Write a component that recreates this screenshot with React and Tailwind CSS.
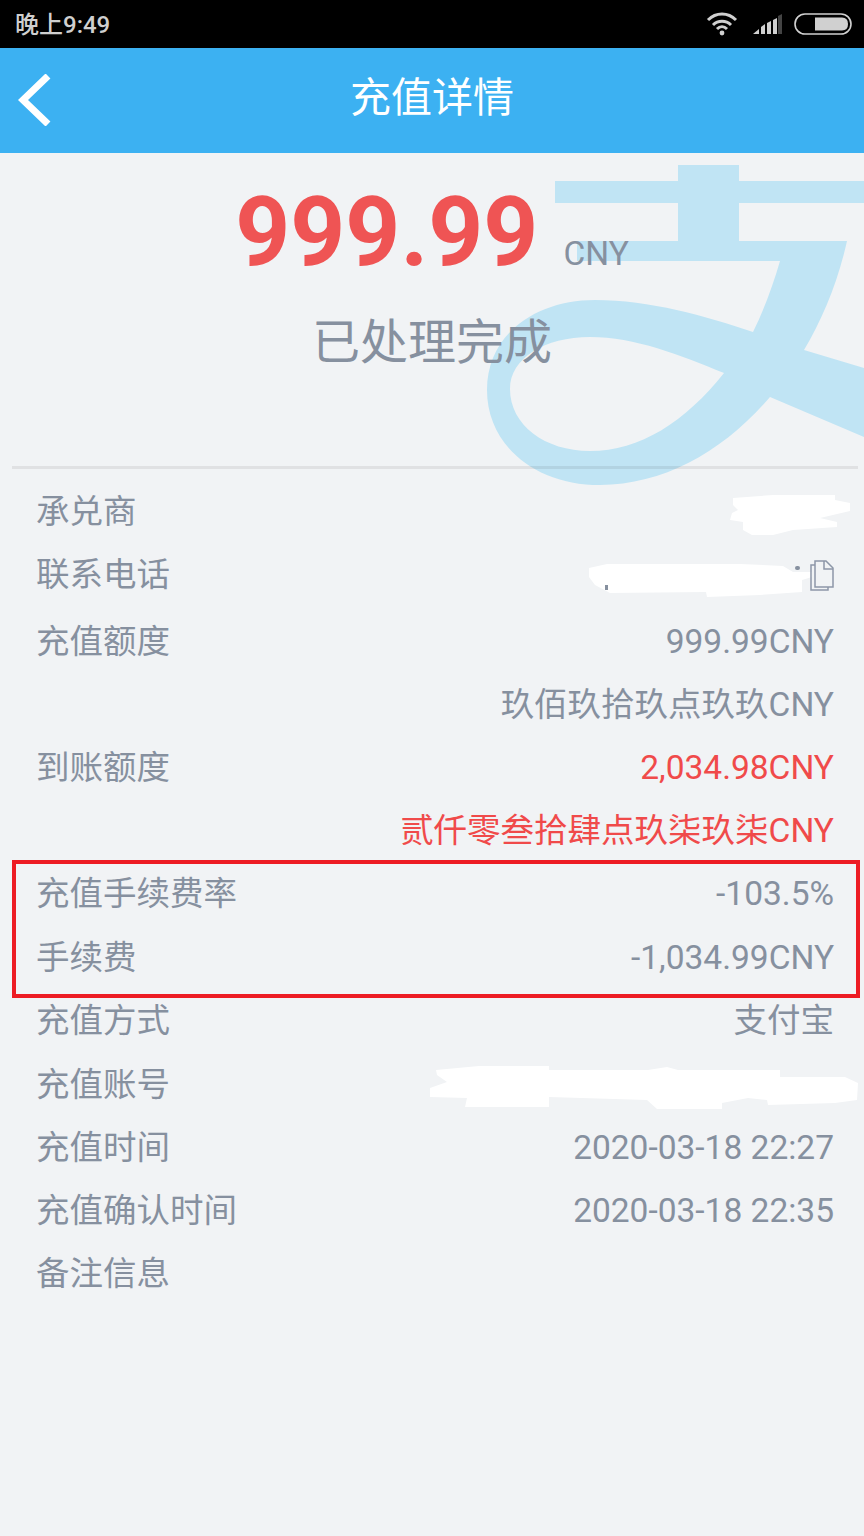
const rowsTop = [
  { label: "承兑商", blot: "a" },
  { label: "联系电话", blot: "b" },
  { label: "充值额度", value: "999.99CNY", gap: true },
  { value: "玖佰玖拾玖点玖玖CNY" },
  { label: "到账额度", value: "2,034.98CNY", red: true },
  { value: "贰仟零叁拾肆点玖柒玖柒CNY", red: true },
];

const rowsFee = [
  { label: "充值手续费率", value: "-103.5%" },
  { label: "手续费", value: "-1,034.99CNY" },
];

const rowsBottom = [
  { label: "充值方式", value: "支付宝" },
  { label: "充值账号", blot: "c" },
  { label: "充值时间", value: "2020-03-18 22:27" },
  { label: "充值确认时间", value: "2020-03-18 22:35" },
  { label: "备注信息" },
];

// white scribbles covering private values
function Blot({ kind }) {
  if (kind === "a") {
    return (
      <svg className="absolute right-[10px] top-[4px]" width="126" height="44" viewBox="0 0 126 44">
        <path d="M5 4L45 1L107 1L107 6L122 9L122 17L92 24L109 28L109 33L65 36L45 41L24 41L15 36L15 28L2 26L4 19L10 16L5 11Z" fill="#fff" />
      </svg>
    );
  }
  if (kind === "b") {
    return (
      <div className="absolute right-[30px] top-[7px] w-[248px] h-[38px]">
        <svg className="absolute left-[1px] top-[1px]" width="226" height="37" viewBox="0 0 226 37">
          <path d="M2 7L20 3L153 3L196 5L206 11L225 11L225 16L215 19L215 31L173 34L120 36L119 31L23 32L8 24L2 16Z" fill="#fff" />
          <rect x="18" y="24" width="3" height="5" fill="#86909f" />
          <rect x="208" y="5" width="5" height="4" rx="2" fill="#86909f" />
        </svg>
        <svg className="absolute right-0 top-0" width="24" height="31" viewBox="0 0 24 31" fill="none" stroke="#8d97a8" strokeWidth="1.5">
          <path d="M5 5H1V30H18V27" />
          <path d="M5 1H16L23 8V27H5Z" />
          <path d="M14 1V9H23" />
        </svg>
      </div>
    );
  }
  return (
    <svg className="absolute right-[5px] top-[4px]" width="431" height="44" viewBox="0 0 431 44">
      <path d="M8 4L51 0L121 0L121 4L220 4L239 1L250 4L352 4L352 11L417 11L430 17L429 34L407 37L340 39L339 34L320 32L294 37L294 43L229 43L219 34L121 31L121 41L37 41L39 32L2 31L2 22L19 16L9 9Z" fill="#fff" />
    </svg>
  );
}

function Row({ row, className = "pl-[36px] pr-[30px]" }) {
  return (
    <div className={`relative flex items-center justify-between h-[45px] ${row.gap ? "mt-[4px]" : ""} ${className} text-[33.5px] text-[#86909f]`}>
      <span>{row.label}</span>
      {row.value && <span className={row.red ? "text-[#f04a4a]" : ""}>{row.value}</span>}
      {row.blot && <Blot kind={row.blot} />}
    </div>
  );
}

export default function App() {
  return (
    <div
      className="relative w-[864px] h-[1536px] overflow-hidden bg-[#f1f3f5]"
      style={{ fontFamily: 'Roboto, "Noto Sans CJK SC", sans-serif' }}
    >
      {/* status bar */}
      <div className="h-12 bg-black flex items-center justify-between pl-[15px] pr-[12px]">
        <span className="text-[24px] font-medium text-[#cfcfcf] translate-y-[1px]">晚上9:49</span>
        <div className="flex items-center">
          <svg width="32" height="24" viewBox="0 0 32 24" fill="none" stroke="#d0d0d0" strokeWidth="3">
            <path d="M2 8C10 0 22 0 30 8" />
            <path d="M7 13C12 8 20 8 25 13" />
            <path d="M11 17C14 14 18 14 21 17" />
            <circle cx="16" cy="21" r="2.4" fill="#d0d0d0" stroke="none" />
          </svg>
          <svg className="ml-[15px]" width="30" height="22" viewBox="0 0 30 22" fill="#d0d0d0">
            <path d="M0 21L6 16V21Z" />
            <path d="M8 14L12 11V21H8Z" />
            <path d="M14 10L18 8V21H14Z" />
            <path d="M20 7L24 5V21H20Z" />
            <path d="M25 3L29 1V21H25Z" fill="#444" />
          </svg>
          <svg className="ml-[11px]" width="58" height="22" viewBox="0 0 58 22">
            <rect x="1" y="1" width="56" height="20" rx="10" fill="none" stroke="#d0d0d0" strokeWidth="1.6" />
            <path d="M21 4.5H48Q54 4.5 54 11Q54 17.5 48 17.5H21Z" fill="#d0d0d0" />
          </svg>
        </div>
      </div>

      {/* header */}
      <div className="relative h-[105px] bg-[#3cb1f2] flex items-center justify-center pb-[4px]">
        <svg className="absolute left-[18px] top-[26px]" width="34" height="52" viewBox="0 0 34 52" fill="none" stroke="#fff" strokeWidth="7">
          <path d="M30 2L5 26L30 50" strokeLinejoin="miter" />
        </svg>
        <span className="text-[41px] text-white">充值详情</span>
      </div>

      {/* watermark */}
      <svg className="absolute left-0 top-0" width="864" height="500" viewBox="0 0 864 500">
        <path
          fillRule="evenodd"
          fill="#c0e4f4"
          d="M555 181H678V165H739V181H864V203H739V241H847C838 282 822 320 804 350L864 368V437L770 397C725 450 665 485 600 485C535 485 487 445 487 390C487 335 535 300 595 300C650 300 705 316 753 332C764 310 773 285 780 261H577V241H678V203H555ZM724 373C680 355 635 337 590 337C545 337 510 358 510 389C510 425 545 451 590 451C640 451 685 422 724 373Z"
        />
      </svg>

      {/* amount */}
      <div className="relative h-[313px]">
        <div className="flex justify-center items-baseline gap-[25px] pt-[14px]">
          <span className="text-[96px] leading-[130px] font-bold text-[#ef5454]">999.99</span>
          <span className="text-[33.5px] text-[#86909f]">CNY</span>
        </div>
        <div className="mt-[14px] text-center text-[48px] leading-[64px] text-[#86909f]">已处理完成</div>
      </div>

      <div className="relative ml-[12px] mr-[6px] h-[3px] bg-black/[0.07]" />

      {/* detail rows */}
      <div className="relative pt-[21px]">
        <div className="flex flex-col gap-[18px]">
          {rowsTop.map((row, i) => (
            <Row key={i} row={row} />
          ))}
        </div>
        <div className="ml-[12px] mr-[4px] mt-[6px] h-[138px] border-4 border-[#ed1c24] pt-[8px] flex flex-col gap-[19px]">
          {rowsFee.map((row, i) => (
            <Row key={i} row={row} className="pl-[20px] pr-[22px]" />
          ))}
        </div>
        <div className="flex flex-col gap-[18.25px] pt-[1px]">
          {rowsBottom.map((row, i) => (
            <Row key={i} row={row} />
          ))}
        </div>
      </div>
    </div>
  );
}
